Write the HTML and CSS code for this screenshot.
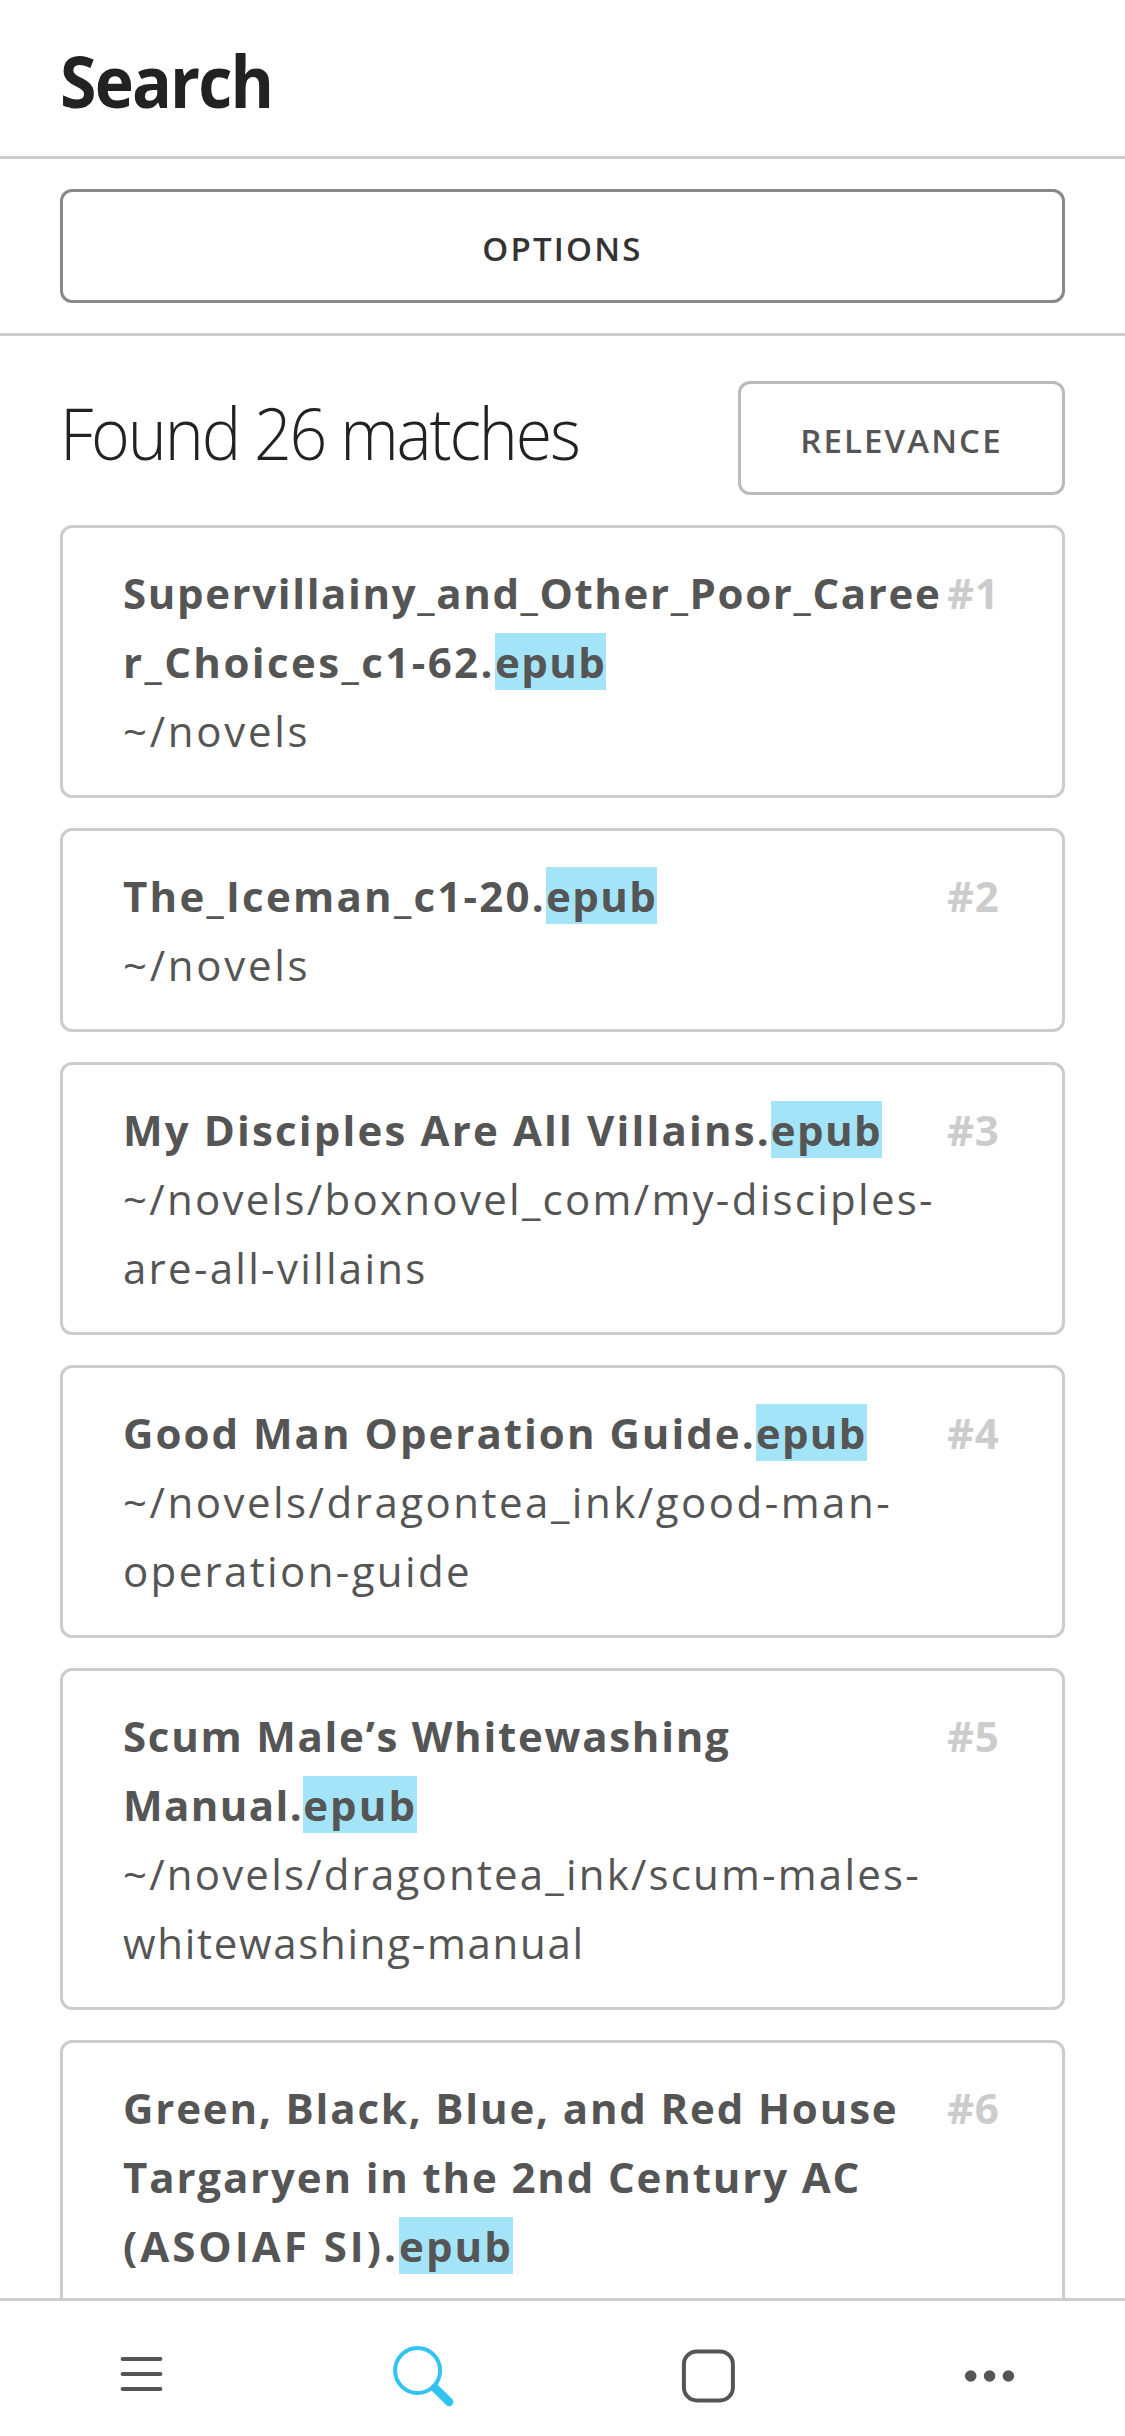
FILE: index.html
```html
<!DOCTYPE html>
<html lang="en">
<head>
<meta charset="utf-8">
<title>Search</title>
<link rel="stylesheet" href="styles.css">
</head>
<body>
<div class="app">
  <header class="header"><h1 class="page-title">Search</h1></header>
  <section class="toolbar"><button class="button button-options">Options</button></section>
  <main class="results">
    <div class="summary">
      <h2 class="count">Found 26 matches</h2>
      <button class="button button-sort">Relevance</button>
    </div>
    <article class="card">
      <div class="info">
        <div class="name"><span class="line t1a">Supervillainy_and_Other_Poor_Caree</span><span class="line t1b">r_Choices_c1-62.<mark>epub</mark></span></div>
        <div class="path"><span class="line p1">~/novels</span></div>
      </div>
      <div class="rank">#1</div>
    </article>
    <article class="card">
      <div class="info">
        <div class="name"><span class="line t2">The_Iceman_c1-20.<mark>epub</mark></span></div>
        <div class="path"><span class="line p1">~/novels</span></div>
      </div>
      <div class="rank">#2</div>
    </article>
    <article class="card">
      <div class="info">
        <div class="name"><span class="line t3">My Disciples Are All Villains.<mark>epub</mark></span></div>
        <div class="path"><span class="line p3">~/novels/boxnovel_com/my-disciples-</span><span class="line p3">are-all-villains</span></div>
      </div>
      <div class="rank">#3</div>
    </article>
    <article class="card">
      <div class="info">
        <div class="name"><span class="line t4">Good Man Operation Guide.<mark>epub</mark></span></div>
        <div class="path"><span class="line p4a">~/novels/dragontea_ink/good-man-</span><span class="line p4b">operation-guide</span></div>
      </div>
      <div class="rank">#4</div>
    </article>
    <article class="card">
      <div class="info">
        <div class="name"><span class="line t5a">Scum Male’s Whitewashing</span><span class="line t5b">Manual.<mark class="wide">epub</mark></span></div>
        <div class="path"><span class="line p5a">~/novels/dragontea_ink/scum-males-</span><span class="line p5b">whitewashing-manual</span></div>
      </div>
      <div class="rank">#5</div>
    </article>
    <article class="card">
      <div class="info">
        <div class="name"><span class="line t6a">Green, Black, Blue, and Red House</span><span class="line t6b">Targaryen in the 2nd Century AC</span><span class="line t6c">(ASOIAF SI).<mark class="wide">epub</mark></span></div>
      </div>
      <div class="rank">#6</div>
    </article>
  </main>
  <nav class="tabs">
    <a class="tab"><svg class="icon" viewBox="0 0 90 135"><path d="M26.6 58H64.4M26.6 73H64.4M26.6 88H64.4"/></svg></a>
    <a class="tab active"><svg class="icon" viewBox="0 0 90 135"><circle cx="40.6" cy="69.5" r="22.5"/><path class="handle" d="M58 87L72.2 101.1"/></svg></a>
    <a class="tab"><svg class="icon" viewBox="0 0 90 135"><rect x="25.9" y="50.4" width="49" height="49" rx="13"/></svg></a>
    <a class="tab"><svg class="icon" viewBox="0 0 90 135"><g class="dots"><circle cx="31.7" cy="75" r="5.8"/><circle cx="50.6" cy="75" r="5.8"/><circle cx="69.4" cy="75" r="5.8"/></g></svg></a>
  </nav>
</div>
</body>
</html>
```
FILE: styles.css
```css
* { box-sizing: border-box; }
body { margin: 0; background: #fff; color: #222; font-family: "Open Sans", "Noto Sans", sans-serif; }
.app { display: flex; flex-direction: column; width: 1125px; height: 2436px; overflow: hidden; }
.header { display: flex; align-items: center; height: 159px; padding: 4px 60px 0; border-bottom: 3px solid #ccc; flex: none; }
h1, h2 { margin: 0; line-height: 1; white-space: nowrap; transform: scaleX(0.92); transform-origin: left; }
.page-title { font-size: 72px; font-weight: 700; letter-spacing: -2px; }
.toolbar { flex: none; padding: 30px 60px; border-bottom: 3px solid #ccc; }
.button { display: flex; align-items: center; justify-content: center; height: 114px; padding: 4px 0 0; border: 3px solid #bbb; border-radius: 12px; background: transparent; color: #555; font: 600 33px "Open Sans", "Noto Sans", sans-serif; letter-spacing: 2.1px; text-transform: uppercase; }
.button-options { width: 100%; border-color: #888; color: #333; letter-spacing: 2.2px; }
.button-sort { width: 327px; }
.results { flex: 1; min-height: 0; overflow: hidden; display: flex; flex-direction: column; gap: 30px; padding: 45px 60px 0; }
.summary { display: flex; align-items: center; justify-content: space-between; flex: none; }
.count { font-size: 72px; font-weight: 300; letter-spacing: -2.36px; margin-bottom: 12px; }
.card { flex: none; display: flex; padding: 30px 60px; border: 3px solid #ccc; border-radius: 12px; color: #555; font-size: 42px; line-height: 69px; }
.info { width: 824px; flex: none; }
.line { display: block; white-space: nowrap; }
.name { font-weight: 700; }
.path { font-weight: 400; }
mark { background: #a3e4f8; color: inherit; letter-spacing: 1.4px; }
mark.wide { letter-spacing: 2.1px; }
.rank { color: #ccc; font-weight: 700; letter-spacing: 0.5px; }

/* Per-line tracking */
.t1a { letter-spacing: 1.62px; }
.t1b { letter-spacing: 2.42px; }
.t2 { letter-spacing: 2.24px; }
.t3 { letter-spacing: 2.15px; }
.t4 { letter-spacing: 2.01px; }
.t5a { letter-spacing: 1.73px; }
.t5b { letter-spacing: 1.4px; }
.t6a { letter-spacing: 1.84px; }
.t6b { letter-spacing: 1.85px; }
.t6c { letter-spacing: 3.01px; }
.p1 { letter-spacing: 2.7px; }
.p3 { letter-spacing: 2.28px; }
.p4a { letter-spacing: 2.5px; }
.p4b { letter-spacing: 2.35px; }
.p5a { letter-spacing: 2.19px; }
.p5b { letter-spacing: 1.7px; }

.tabs { display: flex; flex: none; height: 138px; border-top: 3px solid #ccc; color: #555; }
.tab { flex: 1; display: flex; justify-content: center; }
.active { color: #33c3f0; }
.icon { width: 90px; height: 135px; fill: none; stroke: currentColor; stroke-width: 4; stroke-linecap: round; }
.handle { stroke-width: 8.4; }
.dots { fill: currentColor; stroke: none; }
```
